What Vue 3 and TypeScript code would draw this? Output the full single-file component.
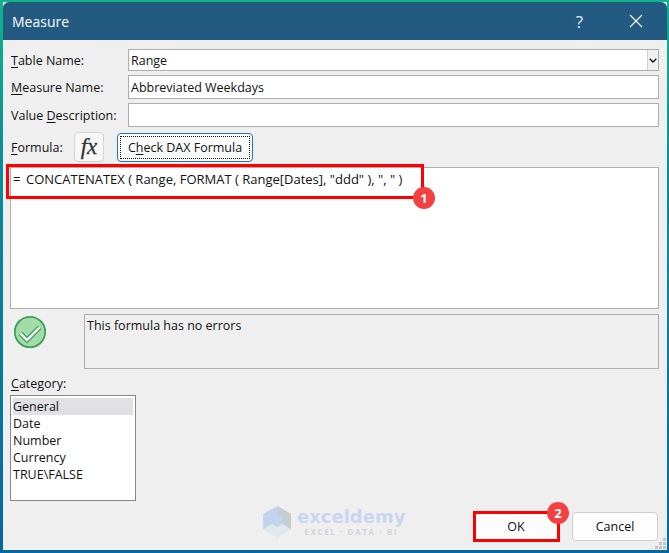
<script setup lang="ts">
const categories: string[] = ['General', 'Date', 'Number', 'Currency', 'TRUE\\FALSE']
</script>

<template>
  <div class="frame">
    <div class="dialog">
      <header class="titlebar">
        <span class="title">Measure</span>
        <span class="help">?</span>
        <svg class="close" width="14" height="14" viewBox="0 0 14 14" aria-hidden="true">
          <path d="M1 1 L13 13 M13 1 L1 13" stroke="#ffffff" stroke-width="1.1" fill="none" />
        </svg>
      </header>

      <main class="body">
        <div class="fields">
          <label class="lbl"><u>T</u>able Name:</label>
          <div class="field select">
            <span>Range</span>
            <span class="arrow">
              <svg width="8" height="5" viewBox="0 0 8 5" aria-hidden="true">
                <path d="M0.7 0.7 L4 4 L7.3 0.7" stroke="#111" stroke-width="1.3" fill="none" />
              </svg>
            </span>
          </div>
          <label class="lbl"><u>M</u>easure Name:</label>
          <div class="field tall">Abbreviated Weekdays</div>
          <label class="lbl">Value <u>D</u>escription:</label>
          <div class="field tall"></div>
        </div>

        <div class="formula-row">
          <label class="lbl formula-lbl"><u>F</u>ormula:</label>
          <button class="fx" type="button"><span>fx</span></button>
          <button class="check" type="button"><span class="dots">C<u>h</u>eck DAX Formula</span></button>
        </div>

        <div class="editor"><span class="eq">=</span>CONCATENATEX ( Range, FORMAT ( Range[Dates], "ddd" ), ", " )</div>

        <div class="status-row">
          <svg class="ok-icon" width="34" height="34" viewBox="0 0 34 34" aria-hidden="true">
            <circle cx="17" cy="17" r="15.200" fill="#a2dca6" stroke="#3f9f5b" stroke-width="1.800" />
            <path d="M7.500 18.500 L14 25 L26.500 12.500" stroke="#3f9f5b" stroke-width="5" fill="none" />
            <path d="M7.500 18.500 L14 25 L26.500 12.500" stroke="#ffffff" stroke-width="2.400" fill="none" />
          </svg>
          <div class="status">This formula has no errors</div>
        </div>

        <label class="lbl cat-lbl"><u>C</u>ategory:</label>
        <ul class="list">
          <li v-for="(c, i) in categories" :key="c" :class="{ sel: i === 0 }">{{ c }}</li>
        </ul>

        <div class="actions">
          <button class="btn" type="button">OK</button>
          <button class="btn" type="button">Cancel</button>
        </div>
      </main>

      <div class="mark mark-formula"></div>
      <span class="badge badge-1">1</span>
      <div class="mark mark-ok"></div>
      <span class="badge badge-2">2</span>

      <div class="watermark">
        <svg width="28" height="31" viewBox="0 0 28 31" aria-hidden="true">
          <path d="M14 0 L28 8 L28 23 L14 31 L0 23 L0 8 Z" fill="#c3d2ee" />
          <path d="M14 0 L28 8 L28 23 L19 18 L19 12 L14 9 Z" fill="#c6ced4" />
          <path d="M0 23 L9 18 L14 21 L19 18 L28 23 L14 31 Z" fill="#dfe8ec" />
        </svg>
        <div class="wm-text">
          <span class="wm-name">exceldemy</span>
          <span class="wm-sub">EXCEL · DATA · BI</span>
        </div>
      </div>

      <svg class="grip" width="12" height="12" viewBox="0 0 12 12" aria-hidden="true">
        <path d="M8 0h3v3H8z M4 4h3v3H4z M8 4h3v3H8z M0 8h3v3H0z M4 8h3v3H4z M8 8h3v3H8z" fill="#c4c4c4" />
      </svg>
    </div>
  </div>
</template>

<style>
html, body { margin: 0; padding: 0; background: #0a6f9a; }
</style>

<style scoped>
* { box-sizing: border-box; }
.frame {
  width: 669px;
  height: 553px;
  padding: 2px 2px 3px 3px;
  background: linear-gradient(180deg, #0fb48a 0, #0a8c9a 30%, #06689f 100%);
  font-family: "Open Sans", "Noto Sans", sans-serif;
  font-size: 12.5px;
  color: #111;
  overflow: hidden;
}
.dialog {
  position: relative;
  width: 664px;
  height: 548px;
  display: flex;
  flex-direction: column;
  background: #efefef;
}
.titlebar {
  flex: none;
  height: 38px;
  display: flex;
  align-items: center;
  padding: 0 24px 0 9px;
  background: #235a82;
  color: #fff;
  border-radius: 6px 6px 0 0;
}
.title { font-size: 14px; flex: 1; }
.help { font-size: 17px; color: #e8eef2; margin-right: 46px; }
.close { display: block; }
.body {
  flex: 1;
  display: flex;
  flex-direction: column;
  padding: 9px 8px 0 7px;
  min-height: 0;
}
.fields {
  display: grid;
  grid-template-columns: 118px 531px;
  grid-template-rows: 22px 24px 24px;
  row-gap: 4px;
}
.lbl { display: flex; align-items: center; white-space: pre; padding-left: 1px; }
.lbl u { text-decoration-thickness: 1px; text-underline-offset: 2px; }
.field {
  background: #fff;
  border: 1px solid #adadad;
  display: flex;
  align-items: center;
  padding-left: 2px;
}
.select { justify-content: space-between; padding-right: 0; }
.arrow {
  width: 11px;
  height: 20px;
  display: flex;
  align-items: center;
  justify-content: center;
  background: #f0f0f0;
  border-left: 1px solid #d0d0d0;
}
.formula-row {
  display: flex;
  align-items: center;
  height: 30px;
  margin-top: 5px;
}
.formula-lbl { width: 64px; }
.fx {
  width: 30px;
  height: 30px;
  padding: 0;
  margin-right: 13px;
  border: 1px solid #d2d2d2;
  border-radius: 4px;
  background: #f7f7f7;
  font-family: "Liberation Serif", serif;
  font-style: italic;
  font-weight: 400;
  font-size: 23px;
  color: #333;
  -webkit-text-stroke: 0.3px #333;
}
.check {
  width: 136px;
  height: 29px;
  padding: 2px;
  border: 1px solid #1a76c4;
  border-radius: 4px;
  background: #fdfdfd;
  font: inherit;
  color: #111;
}
.dots {
  display: flex;
  align-items: center;
  justify-content: center;
  height: 100%;
  border: 1px dotted #111;
}
.dots u { text-decoration-thickness: 1px; text-underline-offset: 2px; }
.editor {
  height: 142px;
  width: 649px;
  margin-top: 5px;
  padding: 2px 0 0 2px;
  background: #fff;
  border: 1px solid #adadad;
  font-size: 13px;
}
.eq { display: inline-block; width: 13px; }
.status-row {
  display: flex;
  height: 55px;
  margin-top: 5px;
}
.ok-icon { flex: none; margin: 1px 0 0 3px; }
.status {
  width: 575px;
  margin-left: 37px;
  padding: 2px 0 0 2px;
  background: #efefef;
  border: 1px solid #adadad;
}
.cat-lbl { margin-top: 4px; height: 20px; }
.list {
  list-style: none;
  width: 126px;
  height: 106px;
  margin: 2px 0 0;
  padding: 2px;
  background: #fff;
  border: 1px solid #86868b;
}
.list li { height: 17px; line-height: 17px; }
.list .sel { background: #e1e0e5; }
.actions {
  display: flex;
  justify-content: flex-end;
  gap: 13px;
  margin-top: 11px;
  padding-right: 0;
  width: 648px;
}
.btn {
  width: 86px;
  height: 29px;
  padding: 0;
  border: 1px solid #cfcfcf;
  border-radius: 4px;
  background: #fdfdfd;
  font: inherit;
  color: #111;
}
.mark {
  position: absolute;
  border: 3px solid #fe0000;
  pointer-events: none;
}
.mark-formula { left: 3px; top: 162px; width: 418px; height: 35px; }
.mark-ok { left: 470px; top: 509px; width: 87px; height: 31px; }
.badge {
  position: absolute;
  width: 22px;
  height: 22px;
  border-radius: 50%;
  background: #f44040;
  color: #fff;
  font-weight: 700;
  font-size: 13px;
  display: flex;
  align-items: center;
  justify-content: center;
}
.badge-1 { left: 410px; top: 185px; }
.badge-2 { left: 544px; top: 500px; }
.watermark {
  position: absolute;
  left: 260px;
  top: 504px;
  display: flex;
  gap: 6px;
  align-items: center;
}
.wm-text { display: flex; flex-direction: column; align-items: center; gap: 1px; }
.wm-name {
  font-family: "DejaVu Sans", sans-serif;
  font-size: 18px;
  font-weight: 700;
  color: #c9d6f0;
  line-height: 19px;
}
.wm-sub {
  font-size: 8px;
  font-weight: 700;
  letter-spacing: 1.6px;
  color: #d0d4d8;
  line-height: 10px;
}
.grip { position: absolute; right: 0; bottom: 0; }
</style>
